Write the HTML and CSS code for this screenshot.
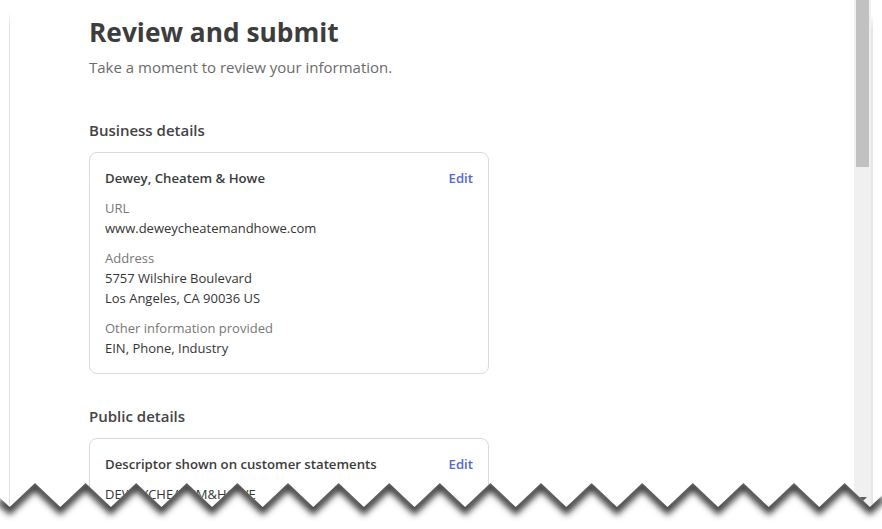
FILE: index.html
```html
<!DOCTYPE html>
<html lang="en">
<head>
    <meta charset="UTF-8">
    <meta name="viewport" content="width=device-width, initial-scale=1.0">
    <title>Review and submit</title>
    <link rel="stylesheet" href="styles.css">
</head>
<body>
    <div class="screen">
        <div class="gutter"></div>
        <div class="window">
            <div class="content">
                <h1>Review and submit</h1>
                <p class="lead">Take a moment to review your information.</p>

                <h2>Business details</h2>
                <div class="card">
                    <div class="card-head">
                        <span class="card-title">Dewey, Cheatem &amp; Howe</span>
                        <a class="edit" href="#">Edit</a>
                    </div>
                    <div class="field">
                        <div class="label">URL</div>
                        <div class="value">www.deweycheatemandhowe.com</div>
                    </div>
                    <div class="field">
                        <div class="label">Address</div>
                        <div class="value">5757 Wilshire Boulevard</div>
                        <div class="value">Los Angeles, CA 90036 US</div>
                    </div>
                    <div class="field">
                        <div class="label">Other information provided</div>
                        <div class="value">EIN, Phone, Industry</div>
                    </div>
                </div>

                <h2>Public details</h2>
                <div class="card">
                    <div class="card-head">
                        <span class="card-title">Descriptor shown on customer statements</span>
                        <a class="edit" href="#">Edit</a>
                    </div>
                    <div class="field">
                        <div class="value">DEWEYCHEATEM&amp;HOWE</div>
                    </div>
                </div>
            </div>
            <div class="scrollbar">
                <div class="thumb"></div>
                <div class="arrow"></div>
            </div>
        </div>
        <div class="frame-edge"></div>
    </div>

    <svg class="tear" width="882" height="60" viewBox="0 0 882 60">
        <defs>
            <filter id="soft" x="-5%" y="-50%" width="110%" height="200%">
                <feGaussianBlur stdDeviation="3"/>
            </filter>
            <clipPath id="below">
                <polygon points="0,29 9.7,38 35,14 60.3,38 85.6,14 110.9,38 136.2,14 161.5,38 186.8,14 212.1,38 237.4,14 262.7,38 288,14 313.3,38 338.6,14 363.9,38 389.2,14 414.5,38 439.8,14 465.1,38 490.4,14 515.7,38 541,14 566.3,38 591.6,14 616.9,38 642.2,14 667.5,38 692.8,14 718.1,38 743.4,14 768.7,38 794,14 819.3,38 844.6,14 869.9,38 882,26.5 882,60 0,60"/>
            </clipPath>
        </defs>
        <polygon points="0,29 9.7,38 35,14 60.3,38 85.6,14 110.9,38 136.2,14 161.5,38 186.8,14 212.1,38 237.4,14 262.7,38 288,14 313.3,38 338.6,14 363.9,38 389.2,14 414.5,38 439.8,14 465.1,38 490.4,14 515.7,38 541,14 566.3,38 591.6,14 616.9,38 642.2,14 667.5,38 692.8,14 718.1,38 743.4,14 768.7,38 794,14 819.3,38 844.6,14 869.9,38 882,26.5 882,60 0,60" fill="#fff"/>
        <g clip-path="url(#below)">
            <polyline points="0,29 9.7,38 35,14 60.3,38 85.6,14 110.9,38 136.2,14 161.5,38 186.8,14 212.1,38 237.4,14 262.7,38 288,14 313.3,38 338.6,14 363.9,38 389.2,14 414.5,38 439.8,14 465.1,38 490.4,14 515.7,38 541,14 566.3,38 591.6,14 616.9,38 642.2,14 667.5,38 692.8,14 718.1,38 743.4,14 768.7,38 794,14 819.3,38 844.6,14 869.9,38 882,26.5" fill="none" stroke="#3f3f3f" stroke-width="9" transform="translate(0,2)" filter="url(#soft)"/>
        </g>
    </svg>
</body>
</html>
```

FILE: styles.css
```css
body {
    margin: 0;
    padding: 0;
    background-color: #fff;
    font-family: "Open Sans", "Noto Sans", sans-serif;
    color: #353535;
    overflow: hidden;
}

.screen {
    display: flex;
    width: 882px;
    height: 529px;
}

.gutter {
    width: 9px;
}

.window {
    flex: 1;
    display: flex;
    border-left: 1px solid #e2e2e2;
    border-image: linear-gradient(to bottom, #fff 12px, #e2e2e2 26px) 1;
}

.content {
    flex: 1;
    padding: 14px 0 0 79px;
}

h1 {
    margin: 0;
    font-size: 26.3px;
    line-height: 36px;
    font-weight: 700;
    color: #3d3d3d;
}

.lead {
    margin: 7px 0 0;
    font-size: 15px;
    line-height: 20px;
    color: #6b6b6b;
}

h2 {
    margin: 43px 0 12px;
    font-size: 15px;
    line-height: 20px;
    font-weight: 600;
    color: #444;
}

.card {
    width: 368px;
    padding: 15px;
    border: 1px solid #dadada;
    border-radius: 8px;
}

.card + h2 {
    margin-top: 32px;
}

.card-head {
    display: flex;
    justify-content: space-between;
    font-size: 13.2px;
    line-height: 20px;
    font-weight: 600;
    color: #3c3c3c;
}

.edit {
    color: #5469d4;
    text-decoration: none;
}

.field {
    margin-top: 10px;
    font-size: 13px;
    line-height: 20px;
}

.label {
    color: #777;
}

.value {
    color: #353535;
}

.scrollbar {
    width: 13px;
    padding: 0 2px;
    background-color: #f0f0f0;
    display: flex;
    flex-direction: column;
    align-items: center;
}

.thumb {
    width: 13px;
    height: 167px;
    background-color: #c1c1c1;
}

.arrow {
    margin-top: auto;
    margin-bottom: 28px;
    width: 0;
    height: 0;
    border-left: 4px solid transparent;
    border-right: 4px solid transparent;
    border-top: 4px solid #606060;
}

.frame-edge {
    width: 2px;
    margin-right: 9px;
    background: linear-gradient(to bottom, #fff 14px, #e6e6e6 30px);
}

.tear {
    position: absolute;
    left: 0;
    top: 469px;
}
```
